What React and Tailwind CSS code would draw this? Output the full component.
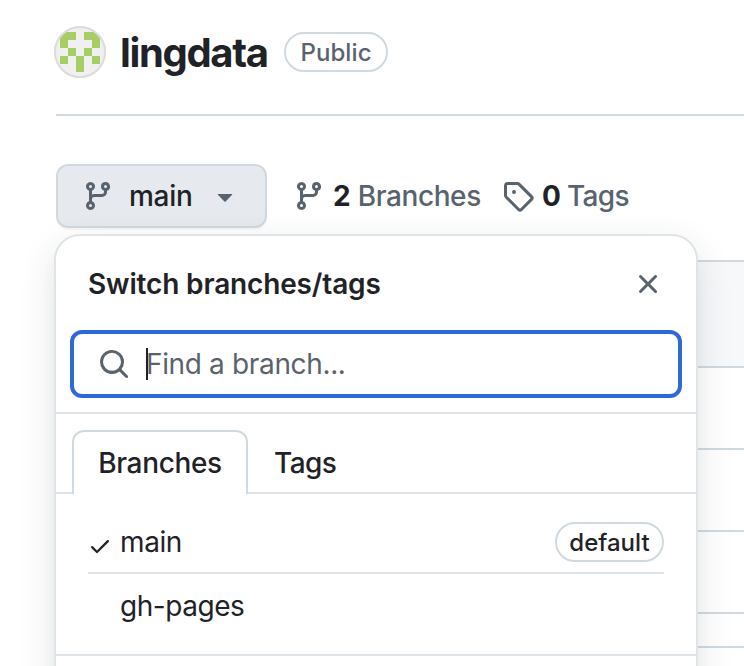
const PATHS = {
  branch:
    'M9.5 3.25a2.25 2.25 0 1 1 3 2.122V6A2.5 2.5 0 0 1 10 8.5H6a1 1 0 0 0-1 1v1.128a2.251 2.251 0 1 1-1.5 0V5.372a2.25 2.25 0 1 1 1.5 0v1.836A2.493 2.493 0 0 1 6 7h4a1 1 0 0 0 1-1v-.628A2.25 2.25 0 0 1 9.5 3.25Zm-6 0a.75.75 0 1 0 1.5 0 .75.75 0 0 0-1.5 0Zm8.25-.75a.75.75 0 1 0 0 1.5.75.75 0 0 0 0-1.5ZM4.25 12a.75.75 0 1 0 0 1.5.75.75 0 0 0 0-1.5Z',
  tag: 'M1 7.775V2.75C1 1.784 1.784 1 2.75 1h5.025c.464 0 .91.184 1.238.513l6.25 6.25a1.75 1.75 0 0 1 0 2.474l-5.026 5.026a1.75 1.75 0 0 1-2.474 0l-6.25-6.25A1.752 1.752 0 0 1 1 7.775Zm1.5 0c0 .066.026.13.073.177l6.25 6.25a.25.25 0 0 0 .354 0l5.025-5.025a.25.25 0 0 0 0-.354l-6.25-6.25a.25.25 0 0 0-.177-.073H2.75a.25.25 0 0 0-.25.25ZM6 5a1 1 0 1 1 0 2 1 1 0 0 1 0-2Z',
  search:
    'M10.68 11.74a6 6 0 0 1-7.922-8.982 6 6 0 0 1 8.982 7.922l3.04 3.04a.749.749 0 0 1-.326 1.275.749.749 0 0 1-.734-.215ZM11.5 7a4.499 4.499 0 1 0-8.997 0A4.499 4.499 0 0 0 11.5 7Z',
  close:
    'M3.72 3.72a.75.75 0 0 1 1.06 0L8 6.94l3.22-3.22a.749.749 0 0 1 1.275.326.749.749 0 0 1-.215.734L9.06 8l3.22 3.22a.749.749 0 0 1-.326 1.275.749.749 0 0 1-.734-.215L8 9.06l-3.22 3.22a.751.751 0 0 1-1.042-.018.751.751 0 0 1-.018-1.042L6.94 8 3.72 4.78a.75.75 0 0 1 0-1.06Z',
  check:
    'M13.78 4.22a.75.75 0 0 1 0 1.06l-7.25 7.25a.75.75 0 0 1-1.06 0L2.22 9.28a.751.751 0 0 1 .018-1.042.751.751 0 0 1 1.042-.018L6 10.94l6.72-6.72a.75.75 0 0 1 1.06 0Z',
  caret:
    'm4.427 7.427 3.396 3.396a.25.25 0 0 0 .354 0l3.396-3.396A.25.25 0 0 0 11.396 7H4.604a.25.25 0 0 0-.177.427Z',
};

function Icon({ name, className = 'size-8 text-[#59636e]' }) {
  return (
    <svg viewBox="0 0 16 16" fill="currentColor" className={`shrink-0 ${className}`}>
      <path d={PATHS[name]} />
    </svg>
  );
}

function Avatar() {
  return (
    <svg viewBox="0 0 52 52" className="size-13 shrink-0">
      <clipPath id="avatar">
        <circle cx="26" cy="26" r="25" />
      </clipPath>
      <circle cx="26" cy="26" r="26" fill="#f0f0f0" />
      <path
        clipPath="url(#avatar)"
        fill="#a6cd66"
        d="M6 6h16v8h-8v8H6zM30 6h16v16h-8v-8h-8zM14 22h8v8h-8zM30 22h8v8h-8zM6 30h8v8H6zM38 30h8v8h-8zM22 30h8v16h-8z"
      />
      <circle cx="26" cy="26" r="25" fill="none" stroke="#dcdcdc" strokeWidth="2" />
    </svg>
  );
}

function Header() {
  return (
    <header className="ml-[54px] flex h-[114px] items-start pt-[26px]">
      <Avatar />
      <h1 className="ml-3.5 w-[164px] text-[40px] leading-[54px] font-bold tracking-[-1.35px]">
        lingdata
      </h1>
      <span className="mt-1.5 flex h-10 w-26 items-center justify-center rounded-full border-2 border-[#d1d9e0] pt-0.5 text-[24px] font-medium tracking-[0.1px] text-[#59636e]">
        Public
      </span>
    </header>
  );
}

function Toolbar() {
  return (
    <div className="flex h-16 items-center text-[28px]">
      <button className="flex h-16 w-[211px] items-center rounded-xl border-2 border-[#d1d9e0] bg-[#e6eaef] pl-6 font-medium shadow-[0_2px_0_#1f23280a]">
        <Icon name="branch" />
        <span className="ml-[15px] w-20 text-left tracking-[-0.3px]">main</span>
        <Icon name="caret" />
      </button>
      <a className="ml-[26px] flex w-[209px] items-center">
        <Icon name="branch" />
        <span className="ml-2 font-bold">2</span>
        <span className="ml-[7px] font-medium tracking-[-0.4px] text-[#59636e]">Branches</span>
      </a>
      <a className="flex items-center">
        <Icon name="tag" />
        <span className="ml-2 font-bold">0</span>
        <span className="ml-1.5 font-medium tracking-[-0.6px] text-[#59636e]">Tags</span>
      </a>
    </div>
  );
}

function FileTable() {
  return (
    <div className="mt-8 border-t-2 border-[#d1d9e0]">
      <div className="h-[106px] border-b-2 border-[#d1d9e0] bg-[#f6f8fa]" />
      <div className="h-[82px] border-b-2 border-[#d1d9e0]" />
      <div className="h-[82px] border-b-2 border-[#d1d9e0]" />
      <div className="h-[82px] border-b-2 border-[#d1d9e0]" />
      <div className="h-[34px] border-b-2 border-[#d1d9e0]" />
    </div>
  );
}

function BranchMenu() {
  return (
    <div className="absolute top-[234px] left-[54px] h-[500px] w-[644px] rounded-[26px] border-2 border-[#dfe4e8] bg-white bg-clip-padding text-[28px] shadow-[0_12px_24px_-6px_#25292e0a,0_12px_36px_0_#25292e1f]">
      <div className="flex h-[94px] items-center justify-between pt-px pr-8 pl-8">
        <h2 className="pt-px font-semibold tracking-[-0.15px]">Switch branches/tags</h2>
        <Icon name="close" />
      </div>
      <div className="mx-3.5 flex h-[68px] items-center rounded-xl border-4 border-[#2f69d6] pl-6">
        <Icon name="search" />
        <span className="ml-4 h-8 w-0.5 bg-[#1f2328]" />
        <span className="-ml-0.5 tracking-[-0.35px] text-[#59636e]">Find a branch...</span>
      </div>
      <div className="mt-3.5 flex h-[82px] border-t-2 border-[#dfe4e8] pt-4 font-medium tracking-[-0.35px]">
        <div className="w-4 border-b-2 border-[#dfe4e8]" />
        <div className="flex w-44 items-center justify-center rounded-t-xl border-2 border-b-0 border-[#d1d9e0]">
          Branches
        </div>
        <div className="flex flex-1 items-center border-b-2 border-[#dfe4e8] pt-1 pl-[26px] tracking-[-0.6px]">
          Tags
        </div>
      </div>
      <div className="mx-8 flex h-20 items-center border-b-2 border-[#dfe4e8] pt-[18px]">
        <Icon name="check" className="mt-2 mr-2 size-6 text-[#1f2328]" />
        <span className="flex-1 tracking-[-0.4px]">main</span>
        <span className="flex h-10 w-[109px] items-center justify-center rounded-full border-2 border-[#d1d9e0] pt-0.5 text-[24px] font-medium">
          default
        </span>
      </div>
      <div className="flex h-[82px] items-center border-b-2 border-[#dfe4e8] pb-4 pl-16 tracking-[-0.45px]">
        gh-pages
      </div>
    </div>
  );
}

export default function App() {
  return (
    <div className="relative h-[666px] w-[744px] overflow-hidden bg-white font-[Inter,'Liberation_Sans',sans-serif] text-[#1f2328]">
      <Header />
      <main className="ml-14 border-t-2 border-[#d1d9e0] pt-12">
        <Toolbar />
        <FileTable />
      </main>
      <BranchMenu />
    </div>
  );
}
